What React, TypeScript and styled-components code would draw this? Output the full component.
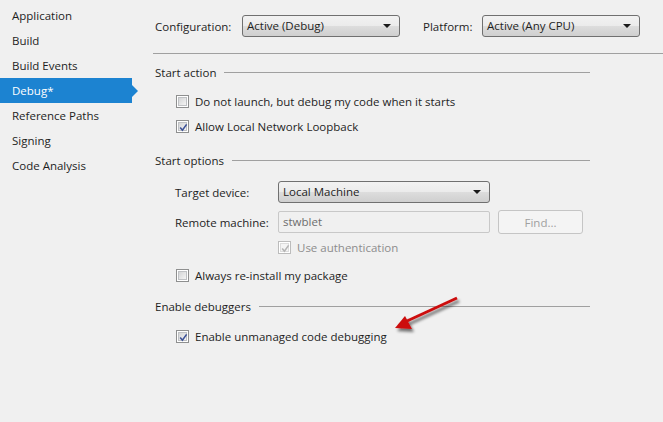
import { styled, createGlobalStyle } from "styled-components";

const GlobalStyle = createGlobalStyle`
  html, body {
    margin: 0;
    padding: 0;
    background: #f0f0f0;
  }
  body {
    font-family: "Open Sans", "Noto Sans", sans-serif;
    font-size: 11.5px;
    color: #1e1e1e;
  }
`;

const Page = styled.div`
  position: relative;
  display: flex;
  flex-direction: row;
  width: 663px;
  height: 422px;
  overflow: hidden;
  background: #f0f0f0;
`;

const Nav = styled.ul`
  list-style: none;
  margin: 0;
  padding: 3px 0 0 0;
  width: 153px;
  flex: none;
`;

const NavItem = styled.li<{ $active?: boolean }>`
  position: relative;
  width: 132px;
  height: 25px;
  line-height: 25px;
  padding-left: 12px;
  box-sizing: border-box;
  white-space: nowrap;
  color: ${(p) => (p.$active ? "#ffffff" : "#1e1e1e")};
  background: ${(p) => (p.$active ? "#1c83d1" : "transparent")};
  &::after {
    content: "";
    display: ${(p) => (p.$active ? "block" : "none")};
    position: absolute;
    right: -6px;
    top: 7px;
    border-left: 6px solid #1c83d1;
    border-top: 6px solid transparent;
    border-bottom: 6px solid transparent;
  }
`;

const Content = styled.div`
  flex: 1;
  display: flex;
  flex-direction: column;
`;

const TopBar = styled.div`
  display: flex;
  flex-direction: row;
  align-items: center;
  margin-top: 15px;
  height: 22px;
  padding-left: 2px;
`;

const Label = styled.span<{ $width: number; $gap?: number }>`
  width: ${(p) => p.$width}px;
  margin-left: ${(p) => p.$gap ?? 0}px;
  flex: none;
  white-space: nowrap;
`;

const Combo = styled.div<{ $width: number }>`
  position: relative;
  width: ${(p) => p.$width}px;
  height: 22px;
  box-sizing: border-box;
  border: 1px solid #707070;
  border-radius: 3px;
  background: linear-gradient(#f2f2f2 0%, #ebebeb 50%, #dddddd 50%, #cfcfcf 100%);
  padding-left: 4px;
  line-height: 20px;
  white-space: nowrap;
  flex: none;
  &::after {
    content: "";
    position: absolute;
    right: 8px;
    top: 8px;
    border-top: 4px solid #1a1a1a;
    border-left: 4px solid transparent;
    border-right: 4px solid transparent;
  }
`;

const Separator = styled.div`
  margin-top: 16px;
  height: 1px;
  background: #a0a0a0;
`;

const Section = styled.div`
  width: 437px;
  display: flex;
  flex-direction: column;
`;

const SectionHeader = styled.div<{ $top: number }>`
  display: flex;
  flex-direction: row;
  align-items: center;
  height: 20px;
  margin-top: ${(p) => p.$top}px;
  padding-left: 2px;
  white-space: nowrap;
  &::after {
    content: "";
    flex: 1;
    height: 1px;
    margin-left: 8px;
    background: #a0a0a0;
  }
`;

const Row = styled.div<{ $top: number; $height?: number; $indent?: number }>`
  display: flex;
  flex-direction: row;
  align-items: center;
  margin-top: ${(p) => p.$top}px;
  height: ${(p) => p.$height ?? 25}px;
  padding-left: ${(p) => p.$indent ?? 23}px;
  white-space: nowrap;
`;

const Box = styled.span<{ $disabled?: boolean }>`
  display: inline-flex;
  align-items: center;
  justify-content: center;
  width: 13px;
  height: 13px;
  box-sizing: border-box;
  border: 1px solid ${(p) => (p.$disabled ? "#bcbcbc" : "#8e8f8f")};
  background: #ffffff;
  padding: 1px;
  flex: none;
  margin-right: 6px;
`;

const BoxInner = styled.span<{ $disabled?: boolean }>`
  display: block;
  width: 9px;
  height: 9px;
  box-sizing: border-box;
  border: 1px solid ${(p) => (p.$disabled ? "#dcdcdc" : "#bfc1c4")};
  background: ${(p) =>
    p.$disabled ? "#f4f4f4" : "linear-gradient(135deg, #d4d5d6 0%, #f4f4f4 100%)"};
  position: relative;
  svg {
    position: absolute;
    left: -2px;
    top: -2px;
  }
`;

const CheckText = styled.span<{ $disabled?: boolean }>`
  color: ${(p) => (p.$disabled ? "#8d8d8d" : "#1e1e1e")};
`;

const TextBox = styled.div`
  width: 212px;
  height: 22px;
  box-sizing: border-box;
  border: 1px solid #c8c8c8;
  border-radius: 2px;
  background: #f0f0f0;
  color: #6d6d6d;
  padding-left: 4px;
  line-height: 20px;
  flex: none;
`;

const Button = styled.div`
  margin-left: 8px;
  width: 85px;
  height: 24px;
  box-sizing: border-box;
  border: 1px solid #c5c5c5;
  border-radius: 3px;
  background: #f4f4f4;
  color: #a0a0a0;
  display: flex;
  align-items: center;
  justify-content: center;
  flex: none;
`;

const Arrow = styled.svg`
  position: absolute;
  left: 385px;
  top: 290px;
`;

const CheckBox = ({ checked, disabled }: { checked?: boolean; disabled?: boolean }) => (
  <Box $disabled={disabled}>
    <BoxInner $disabled={disabled}>
      {checked && (
        <svg width="13" height="13" viewBox="0 0 13 13">
          <path
            d="M3.2 6.6 L5.4 9.2 L9.6 3.4"
            fill="none"
            stroke={disabled ? "#b4b4b4" : "#3d5297"}
            strokeWidth="1.6"
          />
        </svg>
      )}
    </BoxInner>
  </Box>
);

const navItems = [
  "Application",
  "Build",
  "Build Events",
  "Debug*",
  "Reference Paths",
  "Signing",
  "Code Analysis",
];

const App = () => {
  return (
    <Page>
      <GlobalStyle />
      <Nav>
        {navItems.map((item) => (
          <NavItem key={item} $active={item === "Debug*"}>
            {item}
          </NavItem>
        ))}
      </Nav>
      <Content>
        <TopBar>
          <Label $width={87}>Configuration:</Label>
          <Combo $width={158}>Active (Debug)</Combo>
          <Label $width={59} $gap={23}>
            Platform:
          </Label>
          <Combo $width={158}>Active (Any CPU)</Combo>
        </TopBar>
        <Separator />
        <Section>
          <SectionHeader $top={8}>Start action</SectionHeader>
          <Row $top={7}>
            <CheckBox />
            <CheckText>Do not launch, but debug my code when it starts</CheckText>
          </Row>
          <Row $top={0}>
            <CheckBox checked />
            <CheckText>Allow Local Network Loopback</CheckText>
          </Row>
          <SectionHeader $top={11}>Start options</SectionHeader>
          <Row $top={11} $height={22} $indent={22}>
            <Label $width={103}>Target device:</Label>
            <Combo $width={212}>Local Machine</Combo>
          </Row>
          <Row $top={7} $height={24} $indent={22}>
            <Label $width={103}>Remote machine:</Label>
            <TextBox>stwblet</TextBox>
            <Button>Find...</Button>
          </Row>
          <Row $top={4} $height={18} $indent={125}>
            <CheckBox checked disabled />
            <CheckText $disabled>Use authentication</CheckText>
          </Row>
          <Row $top={7}>
            <CheckBox />
            <CheckText>Always re-install my package</CheckText>
          </Row>
          <SectionHeader $top={8}>Enable debuggers</SectionHeader>
          <Row $top={8}>
            <CheckBox checked />
            <CheckText>Enable unmanaged code debugging</CheckText>
          </Row>
        </Section>
      </Content>
      <Arrow width="90" height="50" viewBox="0 0 90 50">
        <defs>
          <filter id="shadow" x="-30%" y="-30%" width="160%" height="160%">
            <feGaussianBlur in="SourceAlpha" stdDeviation="1.5" />
            <feOffset dx="2" dy="3" result="blur" />
            <feComponentTransfer>
              <feFuncA type="linear" slope="0.55" />
            </feComponentTransfer>
            <feMerge>
              <feMergeNode />
              <feMergeNode in="SourceGraphic" />
            </feMerge>
          </filter>
        </defs>
        <g filter="url(#shadow)">
          <line x1="72" y1="8" x2="22" y2="31" stroke="#cc1111" strokeWidth="3" />
          <polygon points="10,38 20,26 27,39" fill="#cc1111" />
        </g>
      </Arrow>
    </Page>
  );
};

export default App;
